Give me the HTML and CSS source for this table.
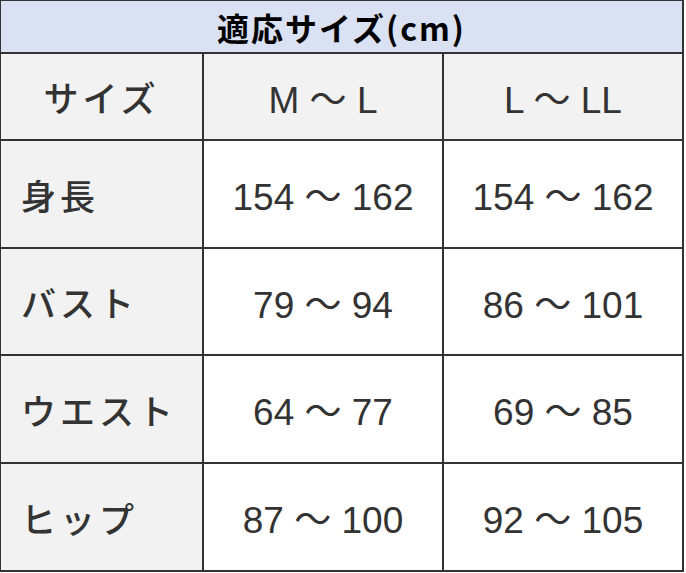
FILE: index.html
```html
<!DOCTYPE html>
<html lang="ja">
<head>
<meta charset="utf-8">
<title>適応サイズ</title>
<link rel="stylesheet" href="styles.css">
</head>
<body>
<div class="size-table">
  <div class="cell title">適応サイズ(cm)</div>

  <div class="cell sub label-c">サイズ</div>
  <div class="cell sub num">M ～ L</div>
  <div class="cell sub num">L ～ LL</div>

  <div class="cell side label">身長</div>
  <div class="cell num">154 ～ 162</div>
  <div class="cell num">154 ～ 162</div>

  <div class="cell side label">バスト</div>
  <div class="cell num">79 ～ 94</div>
  <div class="cell num">86 ～ 101</div>

  <div class="cell side label">ウエスト</div>
  <div class="cell num">64 ～ 77</div>
  <div class="cell num">69 ～ 85</div>

  <div class="cell side label">ヒップ</div>
  <div class="cell num">87 ～ 100</div>
  <div class="cell num">92 ～ 105</div>
</div>
</body>
</html>
```
FILE: styles.css
```css
html, body {
  margin: 0;
  padding: 0;
  background: #ffffff;
}

.size-table {
  display: grid;
  grid-template-columns: 201px 238px 238px;
  grid-template-rows: 51px 85px 106px 105px 106px 106px;
  gap: 2px;
  padding: 1px 2px 2px 1px;
  width: max-content;
  background: #333333;
}

.cell {
  background: #ffffff;
  display: flex;
  align-items: center;
  justify-content: center;
  color: #333333;
  white-space: nowrap;
}

.title {
  grid-column: 1 / 4;
  background: #d9e1f2;
  color: #000000;
  font-family: "Noto Sans CJK JP", "Liberation Sans", sans-serif;
  font-weight: 700;
  font-size: 32px;
  letter-spacing: 2px;
}

.sub,
.side {
  background: #f2f2f2;
}

.label,
.label-c {
  font-family: "Noto Sans CJK JP", sans-serif;
  font-weight: 500;
  font-size: 35px;
  letter-spacing: 4px;
}

.label {
  justify-content: flex-start;
  padding-left: 20px;
}

.num {
  font-family: "Liberation Sans", "Noto Sans CJK JP", sans-serif;
  font-size: 37px;
}
```
